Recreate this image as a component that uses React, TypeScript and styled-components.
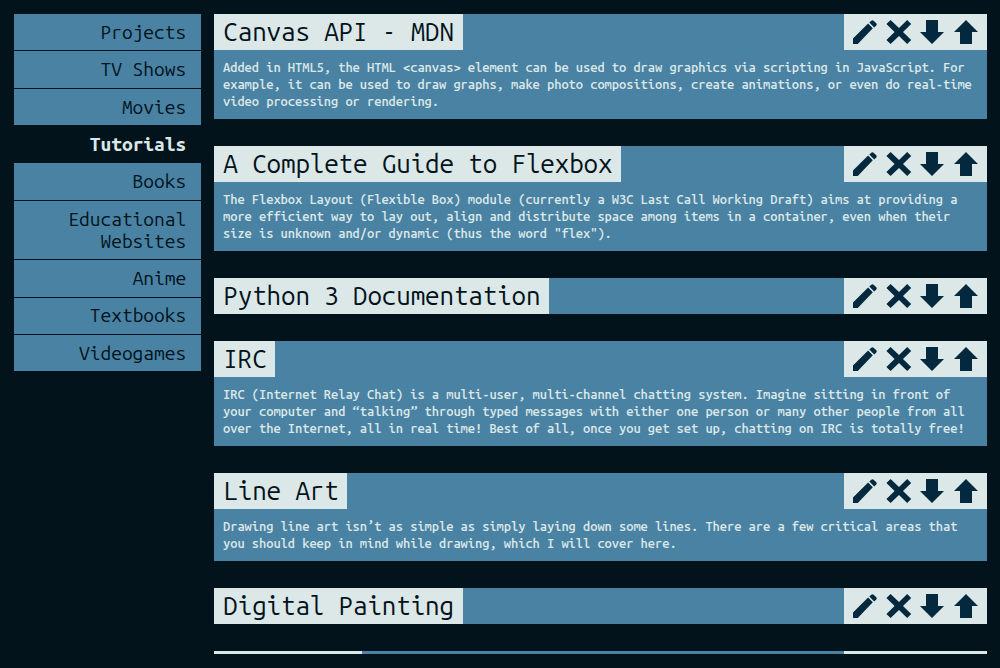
import React from "react";
import styled, { createGlobalStyle } from "styled-components";

const color = {
  night: "#02131b",
  blue: "#4982a3",
  pale: "#dce8e8",
  icon: "#04293e",
};

const GlobalStyle = createGlobalStyle`
  * { box-sizing: border-box; }
  body {
    margin: 0;
    background: ${color.night};
    font-family: "Ubuntu Mono", "DejaVu Sans Mono", monospace;
  }
`;

const Page = styled.div`
  display: flex;
  align-items: flex-start;
  gap: 13px;
  height: 668px;
  padding: 14px 13px 14px 14px;
  overflow: hidden;
`;

const Sidebar = styled.nav`
  display: flex;
  flex-direction: column;
  gap: 1px;
  width: 187px;
  flex: none;
`;

const Category = styled.a<{ $active?: boolean }>`
  padding: 6.8px 14.8px 7.52px 40px;
  font-size: 19.2px;
  line-height: 22.04px;
  letter-spacing: -0.03px;
  text-align: right;
  color: ${(p) => (p.$active ? color.pale : color.night)};
  background: ${(p) => (p.$active ? "transparent" : color.blue)};
  font-weight: ${(p) => (p.$active ? 600 : 400)};
`;

const List = styled.main`
  display: flex;
  flex-direction: column;
  gap: 27px;
  flex: 1;
  height: 640px;
  overflow: hidden;
`;

const Card = styled.article`
  flex: none;
  background: ${color.blue};
`;

const CardHeader = styled.header`
  display: flex;
  justify-content: space-between;
  height: 36px;
`;

const Title = styled.h2`
  margin: 0;
  min-width: 61px;
  padding: 0 8.7px 0 9.35px;
  background: ${color.pale};
  color: ${color.night};
  font-size: 26px;
  font-weight: 400;
  line-height: 36px;
  letter-spacing: -0.15px;
  white-space: nowrap;
`;

const BlankTitle = styled.div`
  width: 148px;
  background: ${color.pale};
`;

const Actions = styled.div`
  display: flex;
  align-items: center;
  justify-content: space-between;
  width: 143px;
  padding: 0 9px;
  background: ${color.pale};
`;

const Icon = styled.svg`
  display: block;
  width: 24px;
  height: 24px;
  fill: ${color.icon};
`;

const Description = styled.p`
  margin: 0;
  padding: 9px;
  color: ${color.pale};
  font-size: 13px;
  font-weight: 500;
  line-height: 17px;
  letter-spacing: -0.08px;
`;

const iconPaths = [
  "M0 24V18.6L15.1 3.6L19.8 8.3L4.8 24ZM16.3 2.6L18.3 0.7Q19.4 -0.3 20.6 0.7L23.3 3.3Q24.3 4.4 23.3 5.6L21.2 7.5Z",
  "M3.6 0L12 8L20.2 0L24.2 4L16 12L24.2 20L20.2 24L12 16L3.6 24L-0.6 20L7.6 12L-0.6 4Z",
  "M6 0H18V12H24L12 24L0 12H6Z",
  "M12 0L24 12H18V24H6V12H0Z",
];

const categories = [
  "Projects",
  "TV Shows",
  "Movies",
  "Tutorials",
  "Books",
  "Educational Websites",
  "Anime",
  "Textbooks",
  "Videogames",
];

const bookmarks: { title?: string; text?: string }[] = [
  {
    title: "Canvas API - MDN",
    text: "Added in HTML5, the HTML <canvas> element can be used to draw graphics via scripting in JavaScript. For example, it can be used to draw graphs, make photo compositions, create animations, or even do real-time video processing or rendering.",
  },
  {
    title: "A Complete Guide to Flexbox",
    text: "The Flexbox Layout (Flexible Box) module (currently a W3C Last Call Working Draft) aims at providing a more efficient way to lay out, align and distribute space among items in a container, even when their size is unknown and/or dynamic (thus the word \"flex\").",
  },
  { title: "Python 3 Documentation" },
  {
    title: "IRC",
    text: "IRC (Internet Relay Chat) is a multi-user, multi-channel chatting system. Imagine sitting in front of your computer and “talking” through typed messages with either one person or many other people from all over the Internet, all in real time! Best of all, once you get set up, chatting on IRC is totally free!",
  },
  {
    title: "Line Art",
    text: "Drawing line art isn’t as simple as simply laying down some lines. There are a few critical areas that you should keep in mind while drawing, which I will cover here.",
  },
  { title: "Digital Painting" },
  {},
];

export default function App() {
  return (
    <>
      <GlobalStyle />
      <Page>
        <Sidebar>
          {categories.map((name) => (
            <Category key={name} $active={name === "Tutorials"}>
              {name}
            </Category>
          ))}
        </Sidebar>
        <List>
          {bookmarks.map((item, i) => (
            <Card key={i}>
              <CardHeader>
                {item.title ? <Title>{item.title}</Title> : <BlankTitle />}
                <Actions>
                  {item.title &&
                    iconPaths.map((d) => (
                      <Icon key={d} viewBox="0 0 24 24" overflow="visible">
                        <path d={d} />
                      </Icon>
                    ))}
                </Actions>
              </CardHeader>
              {item.text && <Description>{item.text}</Description>}
            </Card>
          ))}
        </List>
      </Page>
    </>
  );
}
